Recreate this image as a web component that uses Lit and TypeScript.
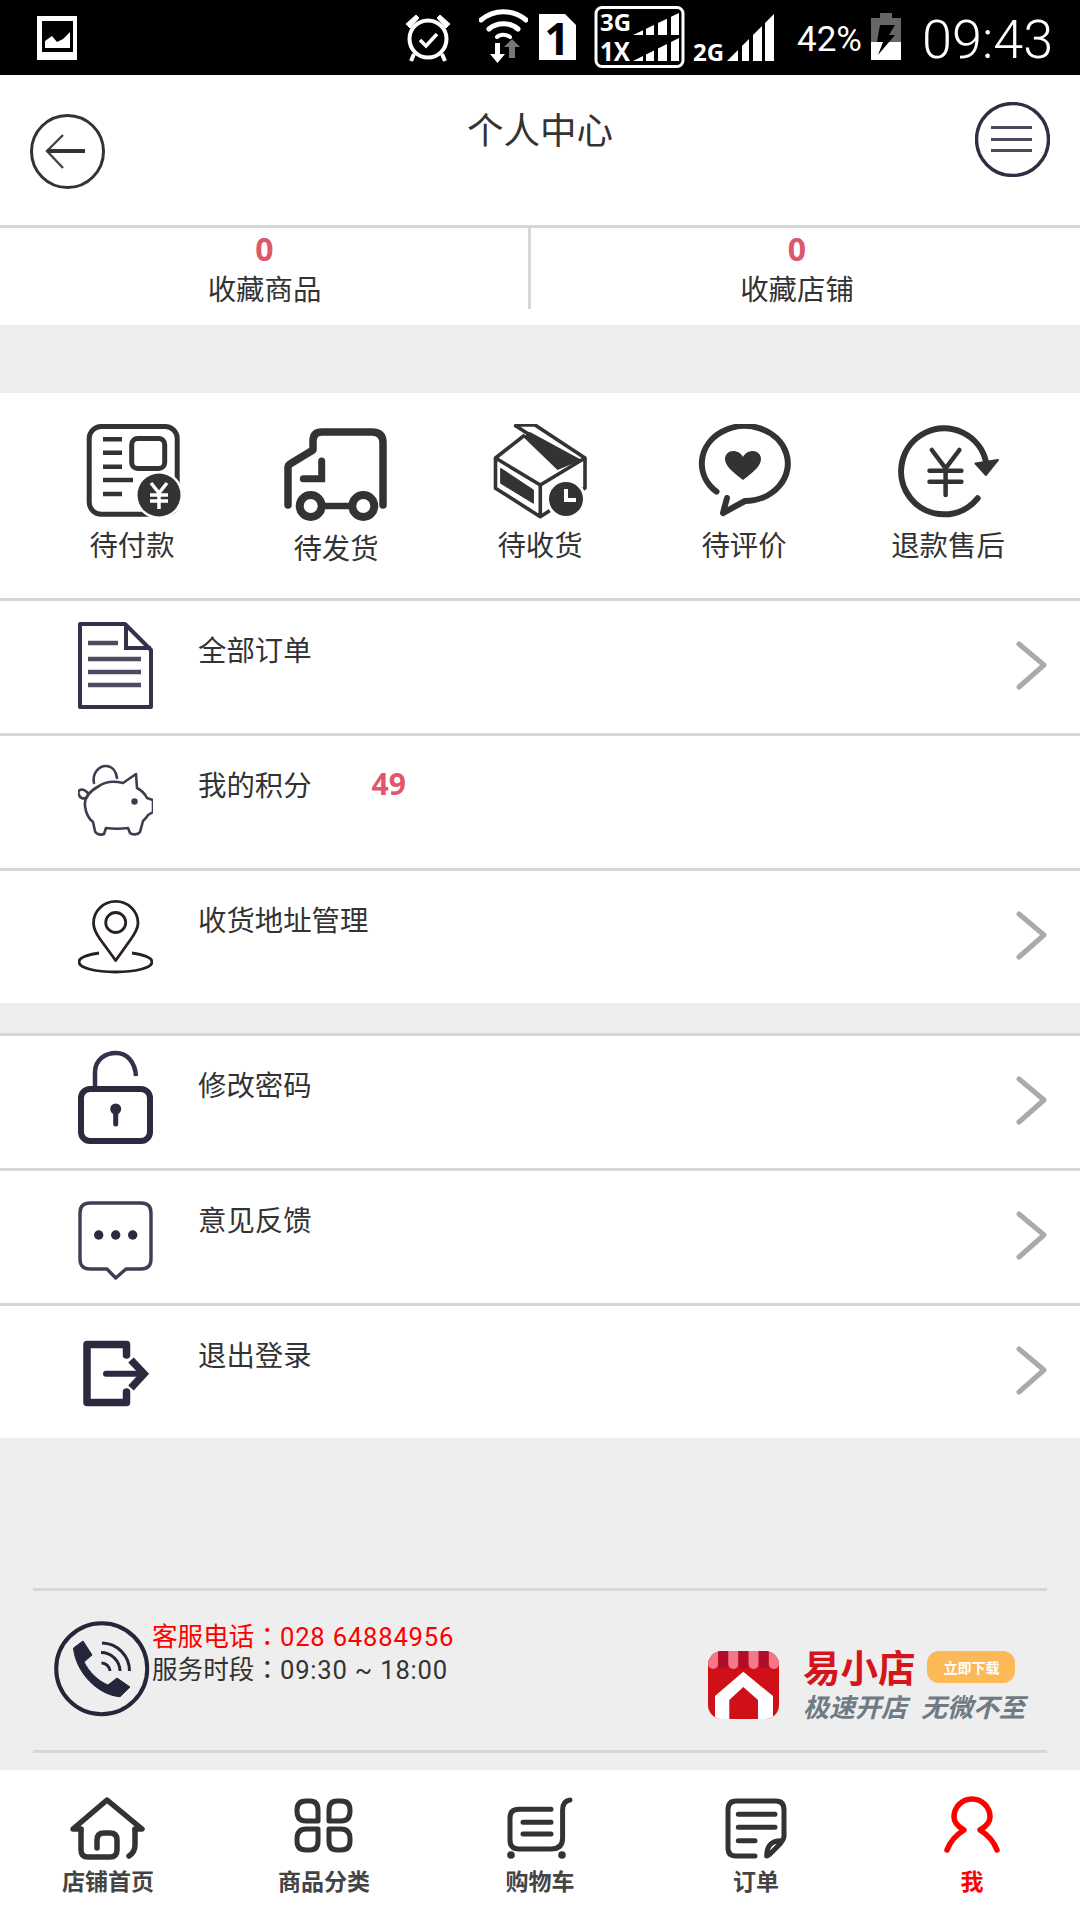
import { LitElement, html, svg, css } from 'lit';
import { customElement } from 'lit/decorators.js';

// signal wedge: bars sit on a base line, tops follow the slope from (x0, base) to (x1, top)
const wedge = (bars: number[][], base: number, top: number) => {
  const x0 = bars[0][0];
  const x1 = bars[bars.length - 1][1];
  const yAt = (x: number) => base - ((x - x0) * (base - top)) / (x1 - x0);
  return bars.map(([a, b]) => svg`<polygon fill="#fff" points="${a},${base} ${a},${yAt(a)} ${b},${yAt(b)} ${b},${base}" />`);
};

const BARS_3G = [[633, 643], [646, 654], [658, 667], [671, 679]];
const BARS_2G = [[727, 738], [742, 749], [753, 762], [765, 774]];

const statusIcons = {
  image: html`<svg class="st st-image" viewBox="37 0 40 75"><rect x="37" y="16" width="40" height="44" fill="#fff"/><rect x="42" y="21" width="31" height="31" fill="#000"/><path d="M45 48V41l7-5 5 6 6-3 7-7v16z" fill="#fff"/></svg>`,
  alarm: html`<svg class="st st-alarm" viewBox="405 0 46 75"><circle cx="428" cy="39" r="18.5" fill="none" stroke="#fff" stroke-width="4"/><path d="M420 40l6 6 11-12" fill="none" stroke="#fff" stroke-width="3.6"/><path d="M406 24l10-9 3 3-9 10zM450 24l-10-9-3 3 9 10z" fill="#fff" stroke="#fff"/><path d="M414 54l-3 7M442 54l3 7" stroke="#fff" stroke-width="4"/></svg>`,
  wifi: html`<svg class="st st-wifi" viewBox="479 0 49 75"><g fill="none" stroke="#fff" stroke-linecap="round"><path d="M481 20c13-11 32-11 45 0" stroke-width="5"/><path d="M489 29c8-7 21-7 29 0" stroke-width="5"/><path d="M497 37c3-3 9-3 13 0" stroke-width="4"/></g><path d="M495 43h5v11h5l-7.500 9-7.500-9h5z" fill="#fff"/><path d="M509 58h6V47h5l-8-8-8 8h5z" fill="#777"/></svg>`,
  sim: html`<svg class="st st-sim" viewBox="539 0 37 75"><path d="M539 14h26l11 11v35h-37z" fill="#fff"/><text class="st-sim-num" x="557" y="55" text-anchor="middle">1</text></svg>`,
  net: html`<svg class="st st-net" viewBox="594 0 91 75"><rect x="596" y="7.500" width="87" height="59" rx="6" fill="none" stroke="#fff" stroke-width="3"/><text class="st-net-a" x="600" y="31" textLength="31" lengthAdjust="spacingAndGlyphs">3G</text><text class="st-net-b" x="600" y="61" textLength="30" lengthAdjust="spacingAndGlyphs">1X</text>${wedge(BARS_3G, 35, 13)}${wedge(BARS_3G, 61, 38)}</svg>`,
  two: html`<svg class="st st-two" viewBox="692 0 83 75"><text class="st-net-c" x="693" y="61" textLength="31" lengthAdjust="spacingAndGlyphs">2G</text>${wedge(BARS_2G, 61, 14)}</svg>`,
  battery: html`<svg class="st st-batt" viewBox="871 0 30 75"><path d="M880 13h12v5h9v24h-30V18h9z" fill="#666"/><rect x="871" y="42" width="30" height="18" fill="#fff"/><path d="M880 25h15l-6 10h6l-17 20 5-13h-6z" fill="#000"/></svg>`,
};

const ITEM_ICONS = {
  doc: svg`<path d="M2 23H47L73 49V106H2Z" fill="none" stroke="#33324a" stroke-width="4" stroke-linejoin="round"/><path d="M48 23V47H73" fill="none" stroke="#33324a" stroke-width="4"/><path d="M10 42H40M10 58H63M10 71H63M10 84H63" stroke="#4c4b60" stroke-width="4.500"/>`,
  pig: svg`<g fill="none" stroke="#3d3d50" stroke-width="2.600" stroke-linejoin="round" stroke-linecap="round"><path d="M16 47C14 37 21 30 28 30C34 30 38 35 39 42"/><path d="M45 47C37 45 28 45 21 50C12 55 6 62 7 70C8 78 11 83 15 86L17 95C18 99 24 99 26 98L28 92C36 93 42 93 50 92L52 97C54 99 60 99 62 96L65 85C67 83 69 81 70 79L75 76V64L69 62C67 58 63 54 59 52L58 38Z"/><path d="M10 57C3 50 -1 55 1 59C2 62 5 63 7 62"/></g><circle cx="56.500" cy="65.500" r="3.200" fill="#3d3d50"/>`,
  pin: svg`<g fill="none" stroke="#2a2020" stroke-width="2.800"><path d="M37.700 89.500L22 68C17 61 15.500 57 15.500 52A22.200 21.500 0 0 1 60 52C60 57 58 61 53 68Z" stroke-linejoin="round"/><circle cx="37.700" cy="51.500" r="10"/><path d="M21 82C8 84 1 87 1 91C1 97 18 101 37.500 101C57 101 74 97 74 91C74 87 67 84 54 82"/></g>`,
  lock: svg`<rect x="3" y="53" width="69" height="52" rx="9" fill="none" stroke="#2b2a3f" stroke-width="6"/><path d="M17 50V36C17 24 27 17 38 17C49 17 57 26 58 40" fill="none" stroke="#33324a" stroke-width="4.500"/><circle cx="37.700" cy="73" r="5.500" fill="#2b2a3f"/><path d="M37.700 74V88" stroke="#2b2a3f" stroke-width="5" stroke-linecap="round"/>`,
  msg: svg`<path d="M12 32H63Q73 32 73 42V88Q73 98 63 98H48L37.700 107L29 98H12Q2 98 2 88V42Q2 32 12 32Z" fill="none" stroke="#3f3e55" stroke-width="3.400" stroke-linejoin="round"/><circle cx="20.700" cy="64" r="4.700" fill="#2b2a3f"/><circle cx="37.700" cy="64" r="4.700" fill="#2b2a3f"/><circle cx="54.700" cy="64" r="4.700" fill="#2b2a3f"/>`,
  exit: svg`<path d="M48.500 49V38.500H9V96.500H48.500V86" fill="none" stroke="#2b2a3f" stroke-width="7.500" stroke-linejoin="round" stroke-linecap="round"/><path d="M28 67.700H62" stroke="#2b2a3f" stroke-width="6" stroke-linecap="round"/><path d="M53 54L66 67.700L53 82" fill="none" stroke="#2b2a3f" stroke-width="7.500"/>`,
};

const ORDER_ICONS = {
  pay: svg`<g fill="none" stroke="#333" stroke-width="5"><rect x="17.200" y="2.500" width="88" height="87.700" rx="12"/><rect x="59.700" y="14.500" width="33" height="30" rx="6"/></g><path d="M31 15.300H50M31 28.700H50M31 42.700H50M31 56H61M31 70H50" stroke="#333" stroke-width="4.500"/><circle cx="87" cy="71" r="24" fill="#fff"/><circle cx="87" cy="71" r="21.500" fill="#333"/><path d="M79 59L87 69L95 59M78 71H96M78 77H96M87 69V85" fill="none" stroke="#fff" stroke-width="3.500"/>`,
  ship: svg`<path d="M107 79V17Q107 6 96 6H46Q37 6 37 15V24L14 38Q12 39 12 42V79" fill="none" stroke="#333" stroke-width="7.500" stroke-linecap="round" stroke-linejoin="round"/><path d="M45.700 35V52.700H27.300" fill="none" stroke="#333" stroke-width="7" stroke-linecap="round"/><circle cx="34.700" cy="80" r="11" fill="none" stroke="#333" stroke-width="8"/><circle cx="87.300" cy="80" r="11" fill="none" stroke="#333" stroke-width="8"/><path d="M47 80H75" stroke="#333" stroke-width="6.500"/>`,
  box: svg`<g fill="none" stroke="#333" stroke-width="3.600" stroke-linejoin="round"><path d="M44.800 11L15.500 34V64.300L60.300 92.700L105 64V34L60.300 61L15.500 34M60.300 61V92.700"/><path d="M34.400 1H55L105 34"/><path d="M34.400 1L50 11"/></g><path d="M43 12.700L50 8L101.600 36L77.500 46Z" fill="#333"/><path d="M20.700 44.300L53.400 66V79.300L20.700 59.300Z" fill="#333" stroke="#333" stroke-width="1"/><circle cx="86" cy="75" r="20" fill="#fff"/><circle cx="86" cy="75" r="17" fill="#333"/><path d="M86 65V76H96" fill="none" stroke="#fff" stroke-width="4"/>`,
  heart: svg`<g transform="translate(-1 0)"><path d="M33.500 67.700A43 37.500 0 1 1 62 77L40 89L44 74" fill="none" stroke="#333" stroke-width="6" stroke-linecap="round" stroke-linejoin="round"/><path d="M60 56C48 47 42 41 42 35C42 30 46 27 50 27C54 27 58 29 60 33C62 29 66 27 70 27C74 27 78 30 78 35C78 41 72 47 60 56Z" fill="#333"/></g>`,
  refund: svg`<path d="M89.600 74.300A43 43 0 1 1 98 37.700" fill="none" stroke="#333" stroke-width="6" stroke-linecap="round"/><path d="M87.500 39.500L110 36L98 51Z" fill="#333" stroke="#333" stroke-width="2" stroke-linejoin="round"/><path d="M43.800 26L57.600 44.300L71.400 26M41.500 46.700H73.400M41.500 57.700H73.400M57.600 44.300V71" fill="none" stroke="#333" stroke-width="4.500" stroke-linecap="round"/>`,
};

const TAB_ICONS = {
  home: svg`<g fill="none" stroke="#333" stroke-width="5.500" stroke-linecap="round" stroke-linejoin="round"><path d="M23 39H15L49 10L84 39H77"/><path d="M23 40V60Q23 67 30 67H52Q59 67 59 60V50Q59 43 52 43H46Q39 43 39 50V58"/><path d="M77 40V55Q77 62 71 66"/></g>`,
  cats: svg`<g fill="none" stroke="#333" stroke-width="5" stroke-linejoin="round"><path d="M44 31H32Q23 31 23 21V20Q23 11 32 11H36Q44 11 44 20Z"/><path d="M55 31H67Q76 31 76 21V20Q76 11 67 11H63Q55 11 55 20Z"/><path d="M44 39H32Q23 39 23 49V51Q23 60 32 60H36Q44 60 44 51Z"/><path d="M55 39H67Q76 39 76 49V51Q76 60 67 60H63Q55 60 55 51Z"/></g>`,
  cart: svg`<g fill="none" stroke="#333" stroke-width="5" stroke-linecap="round"><path d="M80 10Q72.600 11 72.600 20V48Q72.600 59 61 59H28.600Q20 59 20 50V28Q20 19.300 28.600 19.300H61"/><path d="M33 32.300H61M33 44H61"/></g><circle cx="21" cy="65" r="3.800" fill="#333"/><circle cx="72" cy="65" r="3.800" fill="#333"/>`,
  orders: svg`<g fill="none" stroke="#333" stroke-width="5" stroke-linecap="round" stroke-linejoin="round"><path d="M49 66H30Q22 66 22 58V20Q22 11 30 11H70Q78 11 78 20V46Q78 50 72 56L65 63Q62 66 60.700 66Q60.700 50 76 50.700"/><path d="M32.300 24.300H69M32.300 37.300H69M32.300 50.700H49"/></g>`,
  me: svg`<path d="M25 60C28 52 34 45 42 40C35 36 32 32 32 27A18 18 0 1 1 68 27C68 32 65 36 58 40C66 45 72 52 75 60" fill="none" stroke="#f00" stroke-width="5.500" stroke-linecap="round" stroke-linejoin="round"/>`,
};

const AWNING = [0, 1, 2, 3, 4, 5, 6];

@customElement('app-root')
class AppRoot extends LitElement {
  orders = [
    { label: '待付款', icon: ORDER_ICONS.pay },
    { label: '待发货', icon: ORDER_ICONS.ship, low: true },
    { label: '待收货', icon: ORDER_ICONS.box },
    { label: '待评价', icon: ORDER_ICONS.heart },
    { label: '退款售后', icon: ORDER_ICONS.refund },
  ];

  listA = [
    { label: '全部订单', icon: ITEM_ICONS.doc, arrow: true },
    { label: '我的积分', icon: ITEM_ICONS.pig, arrow: false, points: '49' },
    { label: '收货地址管理', icon: ITEM_ICONS.pin, arrow: true },
  ];

  listB = [
    { label: '修改密码', icon: ITEM_ICONS.lock, arrow: true },
    { label: '意见反馈', icon: ITEM_ICONS.msg, arrow: true },
    { label: '退出登录', icon: ITEM_ICONS.exit, arrow: true },
  ];

  tabs = [
    { label: '店铺首页', icon: TAB_ICONS.home },
    { label: '商品分类', icon: TAB_ICONS.cats },
    { label: '购物车', icon: TAB_ICONS.cart },
    { label: '订单', icon: TAB_ICONS.orders },
    { label: '我', icon: TAB_ICONS.me, active: true },
  ];

  private renderRow(row: { label: string; icon: unknown; arrow: boolean; points?: string }) {
    return html`
      <div class="row">
        <svg class="row-icon" viewBox="0 0 75 132">${row.icon}</svg>
        <span class="row-label">${row.label}</span>
        ${row.points ? html`<span class="row-points">${row.points}</span>` : ''}
        ${row.arrow
          ? html`<svg class="row-arrow" viewBox="0 0 40 132"><path d="M7 43L32 64L7 86" fill="none" stroke="#aaa" stroke-width="5" stroke-linecap="round" stroke-linejoin="round"/></svg>`
          : ''}
      </div>
    `;
  }

  render() {
    return html`
      <div class="status">
        ${statusIcons.image}${statusIcons.alarm}${statusIcons.wifi}${statusIcons.sim}${statusIcons.net}${statusIcons.two}
        <span class="st-pct">42%</span>
        ${statusIcons.battery}
        <span class="st-time">09:43</span>
      </div>

      <div class="header">
        <svg class="hd-back" viewBox="0 0 75 75">
          <circle cx="37.500" cy="37.500" r="36" fill="none" stroke="#333" stroke-width="3"/>
          <path d="M33 21L17 37L33 54" fill="none" stroke="#444" stroke-width="2.400"/>
          <path d="M17 37H55" stroke="#333" stroke-width="4"/>
        </svg>
        <div class="hd-title">个人中心</div>
        <svg class="hd-menu" viewBox="0 0 75 75">
          <circle cx="37.500" cy="37.500" r="36" fill="none" stroke="#2f2e42" stroke-width="3.400"/>
          <path d="M16 25.500H57M16 37.500H57M16 48.500H57" stroke="#4a4a5c" stroke-width="3"/>
        </svg>
      </div>

      <div class="stats">
        <div class="stat stat-left"><span class="stat-num">0</span><span class="stat-label">收藏商品</span></div>
        <div class="stat stat-right"><span class="stat-num">0</span><span class="stat-label">收藏店铺</span></div>
      </div>

      <div class="orders">
        ${this.orders.map(o => html`
          <div class="order ${o.low ? 'low' : ''}">
            <svg class="order-icon" viewBox="0 0 120 96">${o.icon}</svg>
            <span class="order-label">${o.label}</span>
          </div>
        `)}
      </div>

      <div class="list">${this.listA.map(r => this.renderRow(r))}</div>
      <div class="list list-b">${this.listB.map(r => this.renderRow(r))}</div>

      <div class="footer">
        <div class="contact">
          <svg class="phone" viewBox="0 0 96 96">
            <circle cx="47.700" cy="47.700" r="45.500" fill="none" stroke="#26263a" stroke-width="4"/>
            <path d="M19.500 27L29 20L38 34L30 41C35 51 44 60 54 64L63 57L76 66L66 75.700C44 74 22 52 19.500 27Z" fill="#26263a" stroke="#26263a" stroke-linejoin="round"/>
            <path d="M48 22A28 28 0 0 1 75.500 50M47 31.500A19 19 0 0 1 66 50M47.500 42A8.500 8.500 0 0 1 56 50" fill="none" stroke="#26263a" stroke-width="3"/>
          </svg>
          <div class="contact-text">
            <div class="tel">客服电话：<span class="digits">028 64884956</span></div>
            <div class="hours">服务时段：<span class="digits">09:30 ~ 18:00</span></div>
          </div>
          <div class="brand">
            <svg class="brand-logo" viewBox="0 0 71 68">
              <defs><clipPath id="logo-clip"><rect width="71" height="68" rx="14"/></clipPath></defs>
              <g clip-path="url(#logo-clip)">
                <rect width="71" height="68" fill="#d01018"/>
                ${AWNING.map(i => svg`<path d="M${i * 10.140} 0h10.140v13a5.070 5.070 0 0 1-10.140 0z" fill="${i % 2 ? '#b00c2c' : '#f2788a'}"/>`)}
                <path d="M35.300 20.700L7 45V68H21.300V49L35.300 36L50 49V68H65V45Z" fill="#fff"/>
              </g>
            </svg>
            <div class="brand-text">
              <div class="brand-top"><span class="brand-name">易小店</span><span class="brand-btn">立即下载</span></div>
              <div class="brand-slogan"><span>极速开店</span><span>无微不至</span></div>
            </div>
          </div>
        </div>
      </div>

      <div class="tabs">
        ${this.tabs.map(t => html`
          <div class="tab ${t.active ? 'active' : ''}">
            <svg class="tab-icon" viewBox="0 0 100 72">${t.icon}</svg>
            <span class="tab-label">${t.label}</span>
          </div>
        `)}
      </div>
    `;
  }

  static styles = css`
    :host {
      display: block;
      position: relative;
      width: 1080px;
      height: 1920px;
      overflow: hidden;
      background: #eeeeee;
      color: #333;
      font-family: "Noto Sans CJK SC", "Noto Sans", sans-serif;
    }

    svg {
      display: block;
      flex: none;
    }

    .status {
      display: flex;
      align-items: flex-start;
      height: 75px;
      background: #000;
      color: #fff;
    }

    .st {
      height: 75px;
    }

    .st-image { width: 40px; margin-left: 37px; }
    .st-alarm { width: 46px; margin-left: 328px; }
    .st-wifi { width: 49px; margin-left: 28px; }
    .st-sim { width: 37px; margin-left: 11px; }
    .st-net { width: 91px; margin-left: 18px; }
    .st-two { width: 83px; margin-left: 7px; }
    .st-batt { width: 30px; margin-left: 9px; }

    .st-sim-num {
      font: 700 44px "Open Sans", sans-serif;
      fill: #000;
    }

    .st-net-a,
    .st-net-b,
    .st-net-c {
      font: 700 23px "Open Sans", sans-serif;
      fill: #fff;
    }

    .st-net-b { font-size: 26px; }

    .st-pct {
      width: 65px;
      margin-left: 22px;
      font: 400 35px/79px Roboto, sans-serif;
      white-space: nowrap;
    }

    .st-time {
      margin-left: 21px;
      font: 300 54px/79px Roboto, sans-serif;
      white-space: nowrap;
    }

    .header {
      display: flex;
      align-items: flex-start;
      height: 150px;
      padding: 0 30px 0 30px;
      background: #fff;
    }

    .hd-back { width: 75px; height: 75px; margin-top: 39px; }
    .hd-menu { width: 75px; height: 75px; margin-top: 27px; }

    .hd-title {
      flex: 1;
      margin-top: 28px;
      font-size: 36.500px;
      line-height: 52px;
      text-align: center;
    }

    .stats {
      display: grid;
      grid-template-columns: 531px 530px;
      height: 94px;
      padding-bottom: 3px;
      border-top: 3px solid #d6d6d6;
      background: #fff;
    }

    .stat {
      display: flex;
      flex-direction: column;
      align-items: center;
      height: 81px;
      box-sizing: border-box;
      padding-top: 1px;
    }

    .stat-left { border-right: 3px solid #d6d6d6; padding-left: 1px; }
    .stat-right { padding-left: 2px; }

    .stat-num {
      font: 700 32px/40px "Open Sans", sans-serif;
      color: #e0566a;
    }

    .stat-label {
      margin-top: 1px;
      font-size: 28.400px;
      line-height: 36px;
    }

    .orders {
      display: grid;
      grid-template-columns: repeat(5, 204px);
      height: 205px;
      margin-top: 68px;
      padding: 0 30px;
      background: #fff;
    }

    .order {
      display: flex;
      flex-direction: column;
      align-items: center;
      padding-top: 31px;
    }

    .order.low { padding-top: 33px; }

    .order-icon { width: 120px; height: 96px; }

    .order-label {
      margin-top: 4px;
      font-size: 28.400px;
      line-height: 40px;
    }

    .order.low .order-label { margin-top: 5px; }

    .list {
      background: #fff;
    }

    .list-b { margin-top: 30px; }

    .row {
      display: flex;
      align-items: flex-start;
      height: 132px;
      border-top: 3px solid #d6d6d6;
    }

    .row-icon {
      width: 75px;
      height: 132px;
      margin-left: 78px;
    }

    .row-label {
      margin-left: 45px;
      padding-top: 28px;
      font-size: 28.400px;
      line-height: 40px;
    }

    .row-points {
      margin-left: 60px;
      padding-top: 28px;
      font: 700 30px/40px "Open Sans", sans-serif;
      color: #e0566a;
    }

    .row-arrow {
      width: 40px;
      height: 132px;
      margin-left: auto;
      margin-right: 28px;
    }

    .footer {
      margin: 150px 33px 0;
      height: 159px;
      border-top: 3px solid #d6d6d6;
      border-bottom: 3px solid #d6d6d6;
    }

    .contact {
      display: flex;
      align-items: flex-start;
      padding: 30px 22px 0 21px;
    }

    .phone { width: 96px; height: 96px; }

    .contact-text {
      margin-left: 2px;
      font: 400 25.600px/33px Roboto, "Noto Sans CJK TC", sans-serif;
      white-space: nowrap;
    }

    .digits { letter-spacing: 0.800px; }

    .tel { color: #f00; }

    .brand {
      display: flex;
      align-items: flex-start;
      margin-left: auto;
      margin-top: 30px;
    }

    .brand-logo { width: 71px; height: 68px; }

    .brand-text { margin-left: 24px; }

    .brand-top {
      display: flex;
      align-items: flex-start;
      height: 34px;
    }

    .brand-name {
      margin-top: -2px;
      font-size: 37.500px;
      font-weight: 700;
      line-height: 34px;
      color: #d6141c;
    }

    .brand-btn {
      width: 88px;
      height: 32px;
      margin-left: 12px;
      border-radius: 12px;
      background: #fdb858;
      color: #fff;
      font-size: 14px;
      font-weight: 700;
      line-height: 32px;
      text-align: center;
    }

    .brand-slogan {
      display: flex;
      gap: 14px;
      margin-top: 6px;
      font-size: 26px;
      font-weight: 700;
      font-style: italic;
      line-height: 30px;
      color: #6f7a85;
    }

    .tabs {
      display: grid;
      grid-template-columns: repeat(5, 216px);
      height: 150px;
      margin-top: 17px;
      background: #fff;
    }

    .tab {
      display: flex;
      flex-direction: column;
      align-items: center;
      padding-top: 20px;
    }

    .tab-icon { width: 100px; height: 72px; }

    .tab-label {
      margin-top: 3px;
      font-size: 23px;
      font-weight: 700;
      line-height: 30px;
      color: #444;
    }

    .tab.active .tab-label { color: #f00; }
  `;
}

declare global {
  interface HTMLElementTagNameMap {
    'app-root': AppRoot;
  }
}
